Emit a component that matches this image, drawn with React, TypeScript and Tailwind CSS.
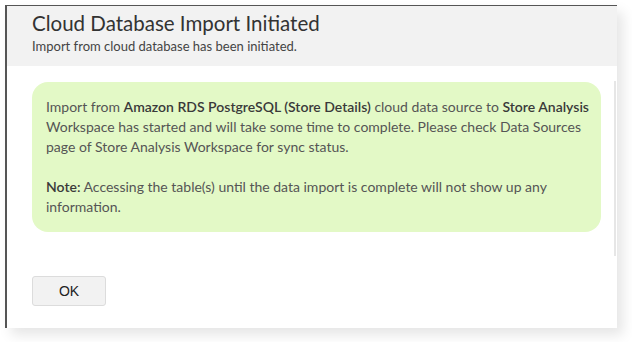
import React from 'react';

const App: React.FC = () => {
  return (
    <div className="w-[632px] h-[342px] bg-white pl-[5px] pt-[5px]" style={{ fontFamily: 'Lato, "Open Sans", sans-serif' }}>
      <div className="w-[612px] h-[323px] bg-white border-l-2 border-t border-[#555] shadow-[6px_7px_12px_rgba(0,0,0,0.10)] flex flex-col">
        {/* Header */}
        <div className="h-[60px] shrink-0 bg-[#f2f2f2] pl-[25px] pt-[4px]">
          <h1 className="text-[20.5px] leading-[26px] text-[#333]">Cloud Database Import Initiated</h1>
          <p className="text-[13px] leading-[18px] text-[#444] mt-[1px]">Import from cloud database has been initiated.</p>
        </div>

        {/* Body */}
        <div className="flex">
          <div className="flex-1 pl-[25px] pt-[16px]">
            <div className="w-[569px] rounded-[16px] bg-[#e3f9c6] pl-[14px] pr-[12px] pt-[15px] pb-[15px] text-[14px] leading-[20px] text-[#555]">
              <p>
                Import from <span className="font-semibold text-[#3a3a3a]">Amazon RDS PostgreSQL (Store Details)</span> cloud data source to{' '}
                <span className="font-semibold text-[#3a3a3a]">Store Analysis</span> Workspace has started and will take some time to complete. Please check Data Sources page of Store Analysis Workspace for sync status.
              </p>
              <p className="mt-[20px]">
                <span className="font-semibold text-[#3a3a3a]">Note:</span> Accessing the table(s) until the data import is complete will not show up any information.
              </p>
            </div>
          </div>
          <div className="w-[2px] mt-[15px] h-[175px] bg-[#e6e6e6] mr-[1px]" />
        </div>

        {/* Footer */}
        <div className="pl-[25px] pt-[20px]">
          <button
            className="w-[74px] h-[30px] rounded-[3px] border border-[#dcdcdc] bg-[#f2f2f2] text-[14px] text-[#222]"
            style={{ fontFamily: '"Liberation Sans", Arial, sans-serif' }}
          >
            OK
          </button>
        </div>
      </div>
    </div>
  );
};

export default App;
